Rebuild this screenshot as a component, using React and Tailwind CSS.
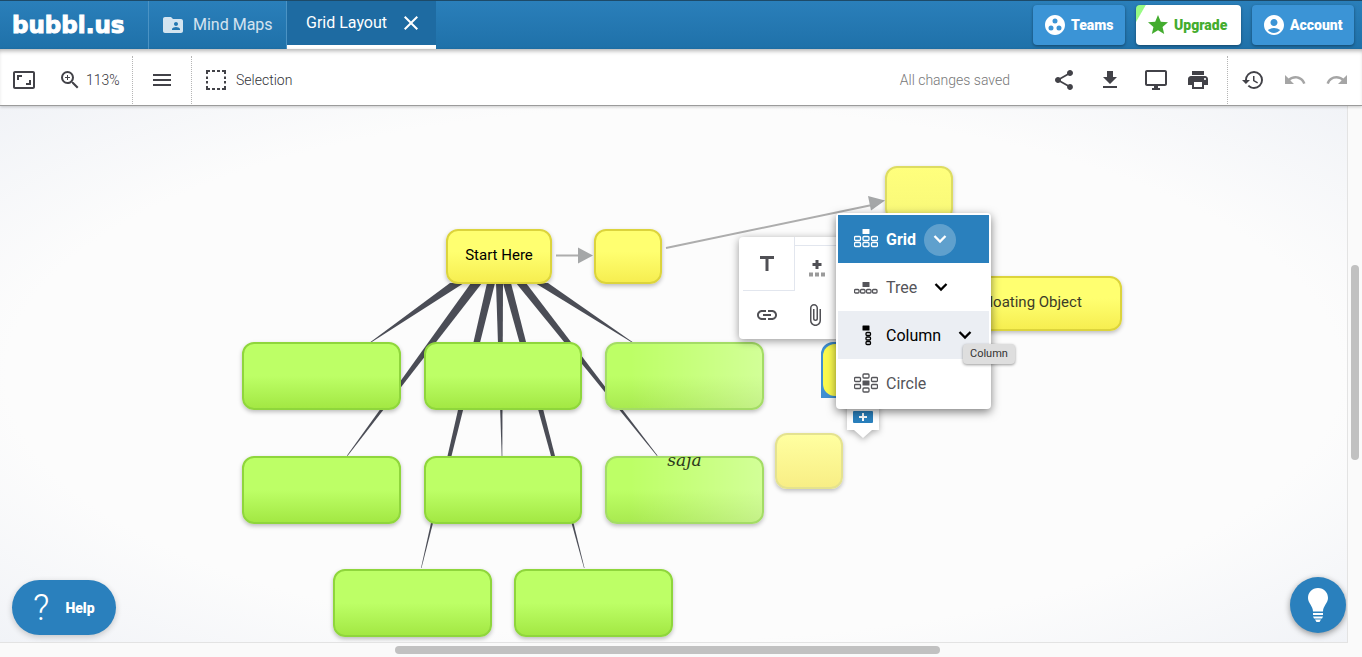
import React from "react";
import {
  MdAspectRatio, MdZoomIn, MdMenu, MdShare, MdFileDownload, MdOutlineDesktopWindows, MdPrint,
  MdHistory, MdUndo, MdRedo, MdGroupWork, MdStar, MdAccountCircle, MdFolderShared,
  MdClose, MdTitle, MdLink, MdAttachFile,
} from "react-icons/md";

const GREEN = "border-[#8fd63c] bg-linear-to-b from-[#bdff66] from-50% to-[#a3e843]";
const GREEN_FADE = "border-[#a4dc66] bg-[linear-gradient(to_right,transparent_15%,rgba(255,255,255,0.32)),linear-gradient(to_bottom,#bdff66_50%,#a9ea50)]";
const YELLOW = "border-[#dcd43c] bg-linear-to-b from-[#ffff70] from-40% to-[#f6ee50]";
const YELLOW_LIGHT = "border-[#dddc62] bg-linear-to-b from-[#ffff7d] to-[#f8f878]";
const YELLOW_PALE = "border-[#e4e290] bg-linear-to-b from-[#ffffa0] to-[#f8ee85]";

function Node({ place, tone, children }) {
  return (
    <div className={`absolute flex justify-center rounded-xl border-2 text-[15px] leading-[48px] text-black shadow-[0_2px_4px_rgba(0,0,0,0.25)] ${tone} ${place}`}>
      {children}
    </div>
  );
}

function Connectors() {
  return (
    <svg className="absolute left-0 top-0 h-[536px] w-[1340px]" viewBox="0 106 1340 536" aria-hidden="true">
      <g fill="#4b4d56">
        <path d="M450 283L464 283L371 342.500L370.500 342Z" />
        <path d="M471 283L482 283L347.500 456L347 455.500Z" />
        <path d="M487 283L495 283L451.500 456L447.500 456Z" />
        <path d="M496 283L503 283L502.300 456L501.700 456Z" />
        <path d="M503 283L511 283L555 456L551 456Z" />
        <path d="M516 283L526 283L657.500 455.500L657 456Z" />
        <path d="M535 283L548 283L632.500 342L632 342.500Z" />
        <path d="M431 523L433 523L421.500 568L421 568Z" />
        <path d="M571.500 523L573.500 523L584.500 568L584 568Z" />
      </g>
      <g stroke="#adadad" strokeWidth="2" fill="none">
        <path d="M556 255.500H580" />
        <path d="M666 248L872 205" />
      </g>
      <g fill="#a5a7a8">
        <path d="M578 247.500L593 255.500L578 263.500Z" />
        <path d="M868 196L885 200.500L871 210.500Z" />
      </g>
    </svg>
  );
}

function Box({ x, y, w = 6, h = 4 }) {
  return <rect x={x + 0.5} y={y + 0.5} width={w} height={h} rx="1" fill="none" stroke="currentColor" strokeWidth="1.300" />;
}

function GridGlyph() {
  return (
    <svg className="h-6 w-6" viewBox="0 0 24 24" aria-hidden="true">
      <rect x="8.500" y="1" width="7" height="5" rx="0.500" fill="currentColor" />
      {[0, 8.5, 17].map((x) => <Box key={x} x={x} y={8} />)}
      {[0, 8.5, 17].map((x) => <Box key={x} x={x} y={14} />)}
    </svg>
  );
}
function TreeGlyph() {
  return (
    <svg className="h-6 w-6" viewBox="0 0 24 24" aria-hidden="true">
      <rect x="8.500" y="6" width="7" height="5" rx="0.500" fill="currentColor" />
      {[0, 6, 12, 18].map((x) => <Box key={x} x={x} y={13} w={4.5} h={3.5} />)}
    </svg>
  );
}
function ColumnGlyph() {
  return (
    <svg className="h-6 w-6" viewBox="0 0 24 24" aria-hidden="true">
      <rect x="8.500" y="1.500" width="7" height="5" rx="0.500" fill="currentColor" />
      <Box x={11.5} y={8} w={4.5} h={3} />
      <Box x={11.5} y={12.5} w={4.5} h={3} />
      <Box x={11.5} y={17} w={4.5} h={3} />
    </svg>
  );
}
function CircleGlyph() {
  return (
    <svg className="h-6 w-6" viewBox="0 0 24 24" aria-hidden="true">
      <rect x="8.500" y="8.500" width="7" height="5" rx="0.500" fill="currentColor" />
      <Box x={8.5} y={1.5} />
      <Box x={8.5} y={15.5} />
      {[0, 17].map((x) => <Box key={x} x={x} y={5} />)}
      {[0, 17].map((x) => <Box key={x} x={x} y={12} />)}
    </svg>
  );
}

function Chevron({ className = "" }) {
  return (
    <svg className={`size-5 ${className}`} viewBox="0 0 20 20" fill="none" stroke="currentColor" strokeWidth="2.300" aria-hidden="true">
      <path d="M4.500 6L10 11.500L15.500 6" />
    </svg>
  );
}

function Tool({ label, children, className = "" }) {
  return (
    <button type="button" aria-label={label} className={`flex h-12 items-center justify-center text-[#424248] ${className}`}>
      {children}
    </button>
  );
}

function Header() {
  return (
    <header className="flex h-[49px] shrink-0 border-t border-[#1d4a68] bg-linear-to-b from-[#2a7fba] to-[#1f71a9] text-white">
      <a href="#home" className="flex w-[149px] items-center border-r border-[#4b93c4] pl-3 font-['DejaVu_Sans',sans-serif] text-[23px] leading-6 font-bold [-webkit-text-stroke:1px_white]">
        bubbl.us
      </a>
      <a href="#maps" className="flex w-[138px] items-center gap-2 border-r border-[#4b93c4] pl-3 text-base text-white/80">
        <MdFolderShared className="size-6" />
        Mind Maps
      </a>
      <div className="flex w-[149px] items-center gap-3 border-b-4 border-white bg-[#1e6ba2] pl-[19px]">
        <a href="#grid">Grid Layout</a>
        <button type="button" aria-label="Close tab"><MdClose className="size-6" /></button>
      </div>
      <nav className="ml-auto flex items-center gap-[11px] pr-2 text-sm font-black">
        <button type="button" className="flex h-10 w-[92px] items-center gap-1 rounded-sm bg-[#3b94d6] pl-[10px] shadow-[0_1px_3px_rgba(0,0,0,0.4)]">
          <MdGroupWork className="size-6" />Teams
        </button>
        <button type="button" className="flex h-10 w-[105px] items-center gap-1 rounded-sm bg-[linear-gradient(120deg,#98fb84_8px,white_9px)] pl-[10px] text-[#43ac2e] shadow-[0_1px_3px_rgba(0,0,0,0.4)]">
          <MdStar className="size-6" />Upgrade
        </button>
        <button type="button" className="flex h-10 w-[102px] items-center gap-1 rounded-sm bg-[#3b94d6] pl-[10px] shadow-[0_1px_3px_rgba(0,0,0,0.4)]">
          <MdAccountCircle className="size-6" />Account
        </button>
      </nav>
    </header>
  );
}

function Toolbar() {
  return (
    <div className="z-10 flex h-[57px] shrink-0 items-center border-b border-[#9b9b9b] bg-white pt-[6px] text-sm font-light text-[#333338] shadow-[0_1px_3px_rgba(0,0,0,0.2),inset_0_4px_4px_-2px_rgba(0,0,0,0.3)]">
      <Tool label="Fit to screen" className="w-12"><MdAspectRatio className="size-6" /></Tool>
      <button type="button" className="flex h-12 w-[84px] items-center gap-1 pl-[10px]">
        <MdZoomIn className="size-6 text-[#424248]" />113%
      </button>
      <div className="h-12 border-l border-dotted border-[#b5b5b5]" />
      <Tool label="Menu" className="w-[58px]"><MdMenu className="size-6" /></Tool>
      <div className="h-12 border-l border-dotted border-[#b5b5b5]" />
      <button type="button" className="flex h-12 items-center gap-2 pl-3">
        <svg className="size-6 text-[#424248]" viewBox="0 0 24 24" fill="none" stroke="currentColor" strokeWidth="2" aria-hidden="true">
          <path d="M2 3H6M8 3H11M13 3H16M18 3H22M2 21H6M8 21H11M13 21H16M18 21H22M3 3V6M3 8.500V11M3 13V15.500M3 18V21M21 3V6M21 8.500V11M21 13V15.500M21 18V21" />
        </svg>
        Selection
      </button>
      <span className="ml-auto mr-8 text-[#777777]">All changes saved</span>
      <Tool label="Share" className="w-11"><MdShare className="size-6" /></Tool>
      <Tool label="Download" className="w-12"><MdFileDownload className="size-6" /></Tool>
      <Tool label="Present" className="w-11"><MdOutlineDesktopWindows className="size-6" /></Tool>
      <Tool label="Print" className="w-10"><MdPrint className="size-6" /></Tool>
      <div className="ml-[9px] h-12 border-l border-dotted border-[#b5b5b5]" />
      <Tool label="History" className="w-[50px]"><MdHistory className="size-6" /></Tool>
      <Tool label="Undo" className="w-[34px]"><MdUndo className="size-6 text-[#a5a5a5]" /></Tool>
      <Tool label="Redo" className="w-[50px]"><MdRedo className="size-6 text-[#a5a5a5]" /></Tool>
    </div>
  );
}

const ROW = "flex h-12 w-full items-center gap-2 pt-0.5 pl-4";

function LayoutMenu() {
  return (
    <ul className="absolute left-[836px] top-[107px] w-[155px] rounded bg-white p-0.5 text-base text-[#55555a] shadow-[0_3px_10px_rgba(0,0,0,0.5)]">
      <li>
        <button type="button" className={`${ROW} bg-[#2a80bd] font-bold text-white`}>
          <GridGlyph />Grid
          <span className="flex size-8 items-center justify-center rounded-full bg-white/25"><Chevron /></span>
        </button>
      </li>
      <li>
        <button type="button" className={ROW}>
          <TreeGlyph />Tree<Chevron className="ml-[6px] text-black" />
        </button>
      </li>
      <li>
        <button type="button" className={`${ROW} bg-[#ebeef3] text-black`}>
          <ColumnGlyph />Column<Chevron className="ml-[6px]" />
        </button>
      </li>
      <li>
        <button type="button" className={ROW}><CircleGlyph />Circle</button>
      </li>
    </ul>
  );
}

function NodeTools() {
  return (
    <div className="absolute left-[739px] top-[131px] grid h-[102px] w-28 grid-cols-2 grid-rows-[54px_48px] rounded bg-white text-[#505055] shadow-[0_2px_8px_rgba(0,0,0,0.4)]">
      <button type="button" aria-label="Text" className="ml-1 flex items-center border-r border-b border-[#e2e6ee] pl-3">
        <MdTitle className="size-6" />
      </button>
      <button type="button" aria-label="Add children" className="mt-2 flex items-center border-t border-[#e2e6ee] pl-[10px]">
        <svg className="size-6" viewBox="0 0 24 24" aria-hidden="true">
          <path d="M7.500 7.500H16.500M12 3V12" stroke="currentColor" strokeWidth="3" />
          <path d="M4 15.500H8V19.500H4ZM10 15.500H14V19.500H10ZM16 15.500H20V19.500H16Z" fill="#9a9a9a" />
        </svg>
      </button>
      <button type="button" aria-label="Link" className="flex items-center justify-center"><MdLink className="size-6" /></button>
      <button type="button" aria-label="Attach file" className="flex items-center pl-2"><MdAttachFile className="size-6" /></button>
    </div>
  );
}

function Canvas() {
  return (
    <main className="relative min-h-0 flex-1 overflow-hidden border-r border-b border-[#e3e3e3] bg-[radial-gradient(ellipse_at_center,#fcfcfc_70%,#f1f3f7)]">
      <Connectors />
      <Node place="left-[446px] top-[123px] h-[55px] w-[106px]" tone={YELLOW}>Start Here</Node>
      <Node place="left-[594px] top-[123px] h-[55px] w-[68px]" tone={YELLOW} />
      <Node place="left-[885px] top-[60px] h-[55px] w-[68px]" tone={YELLOW_LIGHT} />
      <Node place="left-[941px] top-[170px] h-[55px] w-[181px]" tone={YELLOW}><span className="text-[#3c3c28]">Floating Object</span></Node>
      <Node place="left-[242px] top-[236px] h-[68px] w-[159px]" tone={GREEN} />
      <Node place="left-[424px] top-[236px] h-[68px] w-[158px]" tone={GREEN} />
      <Node place="left-[605px] top-[236px] h-[68px] w-[159px]" tone={GREEN_FADE} />
      <Node place="left-[242px] top-[350px] h-[68px] w-[159px]" tone={GREEN} />
      <Node place="left-[424px] top-[350px] h-[68px] w-[158px]" tone={GREEN} />
      <Node place="left-[605px] top-[350px] h-[68px] w-[159px]" tone={GREEN_FADE}>
        <span className="-mt-0.5 h-full overflow-hidden px-1">
          <span className="-mt-2 block font-['DejaVu_Serif',serif] text-[17px] leading-6 text-[#2c3a1c] italic">saja</span>
        </span>
      </Node>
      <Node place="left-[333px] top-[463px] h-[68px] w-[159px]" tone={GREEN} />
      <Node place="left-[514px] top-[463px] h-[68px] w-[159px]" tone={GREEN} />
      <Node place="left-[775px] top-[327px] h-[56px] w-[68px]" tone={YELLOW_PALE} />

      <div className="absolute left-[821px] top-[236px] h-[56px] w-[68px] rounded-tl-xl border-2 border-[#3f8fd2] bg-[#3f8fd2]">
        <div className="h-full rounded-xl bg-[#f9f94e]" />
      </div>
      <button type="button" aria-label="Add bubble" className="absolute left-[847px] top-[296px] drop-shadow-[0_2px_3px_rgba(0,0,0,0.3)]">
        <svg className="h-10 w-8" viewBox="0 0 32 40" aria-hidden="true">
          <path d="M0 0H32V28H25L16 36L7 28H0Z" fill="white" />
          <rect x="6" y="9" width="20" height="12" rx="1" fill="#2a80bd" />
          <path d="M16 11V19M12 15H20" stroke="white" strokeWidth="2" />
        </svg>
      </button>
      <NodeTools />
      <LayoutMenu />
      <div role="tooltip" className="absolute left-[963px] top-[238px] rounded-sm bg-[#dedede] px-[7px] py-px text-[11px] leading-[18px] text-[#333333] shadow-[0_1px_3px_rgba(0,0,0,0.4)]">Column</div>

      <button type="button" className="absolute bottom-[7px] left-3 flex h-[55px] w-[104px] items-center gap-4 rounded-full bg-[#2a80bd] pl-[21px] text-sm font-black text-white shadow-[0_2px_6px_rgba(0,0,0,0.2)]">
        <span className="text-[36px] leading-9 font-light">?</span>Help
      </button>
      <button type="button" aria-label="Tips" className="absolute right-px bottom-[9px] flex size-14 items-center justify-center rounded-full bg-[#2a80bd] text-white shadow-[0_2px_6px_rgba(0,0,0,0.4)]">
        <svg className="h-9 w-6" viewBox="0 0 24 36" fill="currentColor" aria-hidden="true">
          <path d="M12 1C6 1 2 5.500 2 11C2 16 7 19 7 24.500H17C17 19 22 16 22 11C22 5.500 18 1 12 1Z" />
          <path d="M7 26H17V28H7ZM7 29.500H17L16 31.500H8ZM9 32.500H15L13.500 35H10.500Z" />
        </svg>
      </button>
    </main>
  );
}

export default function App() {
  return (
    <div className="flex h-screen flex-col overflow-hidden bg-[#fafafa] font-['Roboto',sans-serif]">
      <Header />
      <Toolbar />
      <div className="flex min-h-0 flex-1">
        <Canvas />
        <div className="w-[14px] shrink-0 pt-[159px] pl-[3px]"><div className="h-[195px] w-2 rounded-full bg-[#c1c1c1]" /></div>
      </div>
      <div className="flex h-[14px] shrink-0 pt-[3px]">
        <div className="ml-[29%] h-2 w-[40%] rounded-full bg-[#c1c1c1]" />
      </div>
    </div>
  );
}
